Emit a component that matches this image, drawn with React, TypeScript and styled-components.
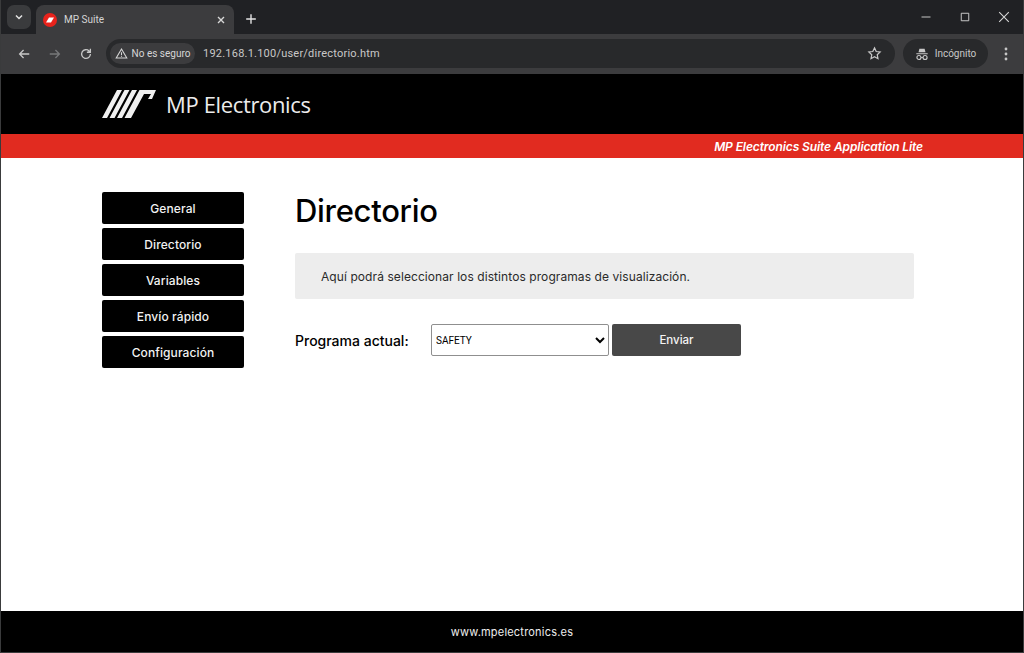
import React from "react";
import styled, { createGlobalStyle } from "styled-components";

const Global = createGlobalStyle`
  html, body { margin: 0; padding: 0; height: 100%; background: #fff; overflow: hidden; }
  #root { height: 100%; }
`;
const Win = styled.div`
  width: 1024px; height: 653px; display: flex; flex-direction: column; box-sizing: border-box;
  border: 1px solid #3a3b3c; border-top: 0; font-family: "Inter", "Liberation Sans", sans-serif; overflow: hidden;
`;
const TabStrip = styled.div`
  height: 34px; background: #202124; display: flex; align-items: flex-end; padding-left: 6px; flex: none;
`;
const TabSearch = styled.div`
  width: 24px; height: 24px; margin-bottom: 5px; border-radius: 7px; background: #3a3b3d; display: flex; align-items: center; justify-content: center; color: #e3e3e3;
`;
const Tab = styled.div`
  width: 198px; height: 29px; margin-left: 5px; background: #3c3c3e; border-radius: 8px 8px 0 0; display: flex; align-items: center; padding: 0 7px 0 7px; box-sizing: border-box; color: #d8d8d8;
`;
const TabTitle = styled.span`
  font: 10px "Roboto", sans-serif; margin-left: 7px; flex: 1; color: #d5d5d5;
`;
const NewTab = styled.div`
  width: 24px; height: 24px; margin: 0 0 3px 5px; display: flex; align-items: center; justify-content: center; color: #e3e3e3;
`;
const Spacer = styled.div`flex: 1;`;
const WinButtons = styled.div`
  display: flex; align-self: flex-start; height: 34px; align-items: center; color: #d8d8d8;
`;
const WinBtn = styled.div`
  width: 39px; height: 34px; display: flex; align-items: center; justify-content: center;
`;
const Toolbar = styled.div`
  height: 40px; background: #3c3c3e; display: flex; align-items: center; flex: none; box-sizing: border-box; padding: 0 0 1px 7px; color: #c7c7c7;
`;
const NavBtn = styled.div<{ $dim?: boolean }>`
  width: 31px; height: 28px; display: flex; align-items: center; justify-content: center; color: ${p => (p.$dim ? "#77787a" : "#c7c7c7")};
`;
const Omni = styled.div`
  margin-left: 5px; width: 789px; height: 29px; border-radius: 15px; background: #28292b; display: flex; align-items: center; padding: 0 7px 0 4px; box-sizing: border-box;
`;
const Chip = styled.div`
  height: 21px; width: 85px; border-radius: 11px; background: #3c3c3e; display: flex; align-items: center; justify-content: center; gap: 4px; font: 10px "Roboto", sans-serif; color: #d6d6d6; flex: none;
`;
const Url = styled.span`
  font: 11px "Roboto", sans-serif; letter-spacing: 0.22px; color: #c8c8c8; margin-left: 8px; flex: 1;
`;
const Star = styled.div`
  width: 28px; display: flex; justify-content: center; color: #c7c7c7;
`;
const Incognito = styled.div`
  margin-left: 8px; width: 85px; height: 29px; border-radius: 15px; background: #28292b; display: flex; align-items: center; justify-content: center; gap: 6px; font: 10px "Roboto", sans-serif; color: #c7c7c7; flex: none;
`;
const Menu = styled.div`
  flex: 1; display: flex; justify-content: center; color: #c7c7c7;
`;
const Head = styled.header`
  height: 60px; background: #000; flex: none; display: flex; align-items: center; padding-left: 101px; gap: 10px;
`;
const Brand = styled.span`
  font: 500 22px "Open Sans", sans-serif; color: #ececec; letter-spacing: -0.35px;
`;
const RedBar = styled.div`
  height: 24px; background: #e12b20; flex: none; display: flex; align-items: center; justify-content: flex-end; padding-right: 100px;
  font: italic 600 12px "Inter", sans-serif; color: #fff; letter-spacing: -0.1px;
`;
const Main = styled.main`
  flex: 1; display: flex; align-items: flex-start; padding: 34px 0 0 101px; background: #fff;
`;
const Side = styled.nav`
  width: 142px; display: flex; flex-direction: column; gap: 4px; flex: none;
`;
const SideBtn = styled.div`
  height: 32px; background: #000; border-radius: 2px; color: #f2f2f2; display: flex; align-items: center; justify-content: center; font: 500 12px "Inter", sans-serif; letter-spacing: 0.1px;
`;
const Content = styled.section`
  margin-left: 51px; width: 619px;
`;
const Title = styled.h1`
  margin: 0; font: 500 31px/38px "Inter", sans-serif; color: #000; letter-spacing: -0.3px;
`;
const Notice = styled.div`
  margin-top: 23px; height: 46px; background: #ededed; border-radius: 2px; display: flex; align-items: center; padding-left: 26px; font: 400 12px "Inter", sans-serif; color: #2a2a2a; letter-spacing: 0.08px;
`;
const Form = styled.div`
  margin-top: 25px; display: flex; align-items: center;
`;
const Label = styled.label`
  width: 136px; font: 500 14px "Inter", sans-serif; color: #000; flex: none;
`;
const Select = styled.select`
  width: 178px; height: 32px; box-sizing: border-box; background: #fff; border: 1px solid #8f8f8f; border-radius: 2px; font: 10px "Roboto", sans-serif; color: #000; padding: 0;
`;
const Send = styled.button`
  margin-left: 3px; width: 129px; height: 32px; background: #484848; color: #f4f4f4; border: 0; border-radius: 2px; font: 500 11.5px "Inter", sans-serif;
`;
const Foot = styled.footer`
  height: 41px; background: #000; flex: none; display: flex; align-items: center; justify-content: center; font: 400 11px "Inter", sans-serif; color: #ededed; letter-spacing: 0.2px;
`;

const Ico = ({ d, s = 14, w = 1.5 }: { d: string; s?: number; w?: number }) => (
  <svg width={s} height={s} viewBox="0 0 16 16" fill="none" stroke="currentColor" strokeWidth={w}><path d={d} /></svg>
);

export default function App() {
  return (
    <Win>
      <Global />
      <TabStrip>
        <TabSearch><Ico s={12} w={2} d="M4 6l4 4 4-4" /></TabSearch>
        <Tab>
          <svg width="14" height="14" viewBox="0 0 14 14"><circle cx="7" cy="7" r="7" fill="#e8231c" /><path d="M3 9.5L6 4.5H11L8 9.5z" fill="#fff" /></svg>
          <TabTitle>MP Suite</TabTitle>
          <Ico s={12} w={1.8} d="M4 4l8 8M12 4l-8 8" />
        </Tab>
        <NewTab><Ico s={14} w={1.6} d="M8 2.5v11M2.5 8h11" /></NewTab>
        <Spacer />
        <WinButtons>
          <WinBtn><Ico s={12} w={1.2} d="M2 8h12" /></WinBtn>
          <WinBtn><Ico s={12} w={1.2} d="M3 3h10v10H3z" /></WinBtn>
          <WinBtn><Ico s={14} w={1.2} d="M2.5 2.5l11 11M13.5 2.5l-11 11" /></WinBtn>
        </WinButtons>
      </TabStrip>
      <Toolbar>
        <NavBtn><Ico d="M14 8H3M7.5 3.5L3 8l4.5 4.5" /></NavBtn>
        <NavBtn $dim><Ico d="M2 8h11M8.5 3.5L13 8l-4.5 4.5" /></NavBtn>
        <NavBtn><Ico d="M13 8a5 5 0 1 1-1.5-3.5L13 6M13 2v4H9" /></NavBtn>
        <Omni>
          <Chip>
            <Ico s={13} w={1.3} d="M8 2.5L14.5 13.5H1.5zM8 6.5v3.5M8 11v1" />
            No es seguro
          </Chip>
          <Url>192.168.1.100/user/directorio.htm</Url>
          <Star><Ico s={15} w={1.3} d="M8 2l1.8 3.9 4.2.5-3.1 2.9.8 4.2L8 11.4l-3.7 2.1.8-4.2L2 6.400l4.200-.5z" /></Star>
        </Omni>
        <Incognito>
          <svg width="14" height="14" viewBox="0 0 16 16" fill="currentColor"><path d="M5 2h6l1 4H4zM1.500 7h13v1.300h-13z" /><circle cx="4.500" cy="12" r="2.300" fill="none" stroke="currentColor" strokeWidth="1.300" /><circle cx="11.500" cy="12" r="2.300" fill="none" stroke="currentColor" strokeWidth="1.300" /><path d="M6.800 11.500h2.400v1H6.800z" /></svg>
          Incógnito
        </Incognito>
        <Menu>
          <svg width="4" height="14" viewBox="0 0 4 14" fill="currentColor"><circle cx="2" cy="2" r="1.400" /><circle cx="2" cy="7" r="1.400" /><circle cx="2" cy="12" r="1.400" /></svg>
        </Menu>
      </Toolbar>
      <Head>
        <svg width="54" height="30" viewBox="0 0 54 30" fill="#f0f0f0">
          <path d="M0 29L15 1H20L5 29zM7.500 29L22.500 1H27.500L12.500 29zM15 29L30 1H35L20 29zM22.500 29L37.500 1H54L50 10H46L49 5H42L29 29z" />
        </svg>
        <Brand>MP Electronics</Brand>
      </Head>
      <RedBar>MP Electronics Suite Application Lite</RedBar>
      <Main>
        <Side>
          {["General", "Directorio", "Variables", "Envío rápido", "Configuración"].map(t => <SideBtn key={t}>{t}</SideBtn>)}
        </Side>
        <Content>
          <Title>Directorio</Title>
          <Notice>Aquí podrá seleccionar los distintos programas de visualización.</Notice>
          <Form>
            <Label>Programa actual:</Label>
            <Select defaultValue="SAFETY"><option>SAFETY</option></Select>
            <Send>Enviar</Send>
          </Form>
        </Content>
      </Main>
      <Foot>www.mpelectronics.es</Foot>
    </Win>
  );
}
